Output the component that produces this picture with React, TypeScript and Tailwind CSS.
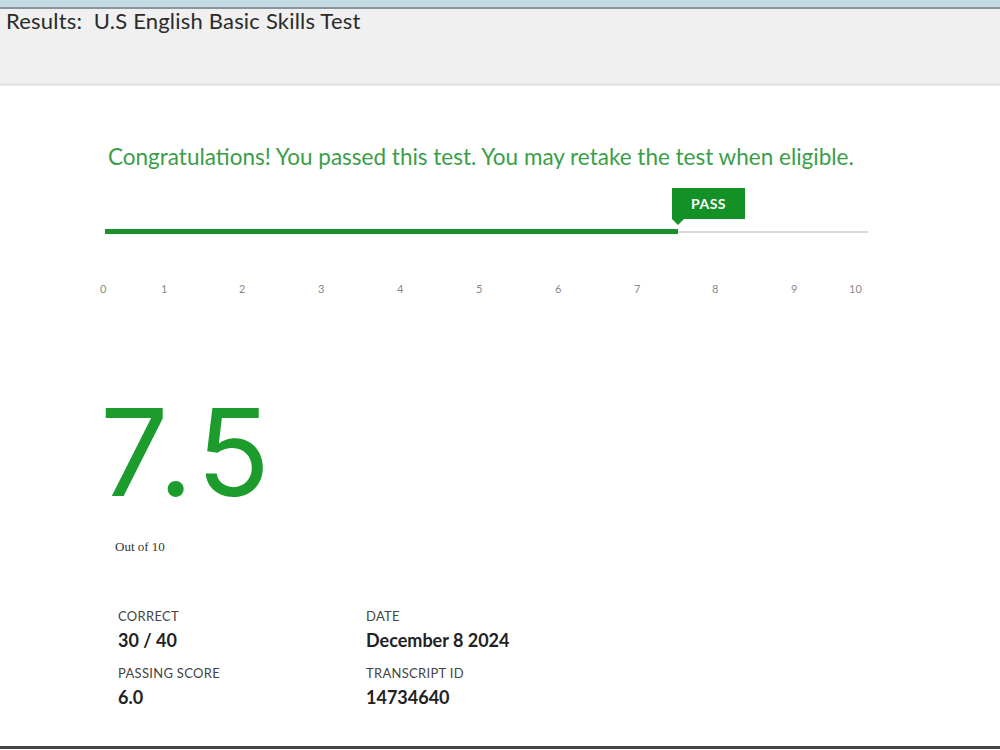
const ticks = ['0', '1', '2', '3', '4', '5', '6', '7', '8', '9', '10'];

function Stat({ label, value }: { label: string; value: string }) {
  return (
    <div>
      <div className="text-[13px] leading-[14px] tracking-[0.3px] text-[#444] uppercase">{label}</div>
      <div className="mt-[7px] text-[18px] leading-[20px] font-bold text-[#222]">{value}</div>
    </div>
  );
}

export default function App() {
  return (
    <div className="w-[1000px] h-[750px] bg-white flex flex-col overflow-hidden font-['Lato',_sans-serif]">
      <div className="h-[9px] bg-[#c3dbe3] border-b-2 border-[#8a9599]" />
      <div className="h-[77px] bg-[#f0f0f0] border-b-[3px] border-[#e6e6e6]">
        <h1 className="pl-[6px] text-[22px] leading-[24px] tracking-[0.2px] text-[#2b2b2b]">Results:&nbsp; U.S English Basic Skills Test</h1>
      </div>

      <div className="flex-1 flex flex-col pl-[105px]">
        <p className="mt-[59px] pl-[3px] text-[22.5px] leading-[24px] text-[#3a9e48]">
          Congratulations! You passed this test. You may retake the test when eligible.
        </p>

        <div className="relative mt-[19px] w-[763px] h-[45px]">
          <div className="absolute left-[567px] top-0 w-[73px] h-[31px] bg-[#139026] flex items-center justify-center text-white text-[14px] font-bold tracking-[0.5px]">
            PASS
          </div>
          <div className="absolute left-[567px] top-[31px] w-0 h-0 border-l-[6px] border-r-[6px] border-t-[6px] border-l-transparent border-r-transparent border-t-[#139026]" />
          <div className="absolute left-0 top-[41px] w-full flex items-center">
            <div className="w-[573px] h-[5px] bg-[#1a8f2a]" />
            <div className="flex-1 h-[2px] bg-[#d8d8d8]" />
          </div>
        </div>

        <div className="mt-[49px] -ml-[5px] grid grid-cols-[61px_78px_79px_79px_79px_79px_79px_78px_79px_58px_auto] text-[11px] leading-[14px] text-[#888]">
          {ticks.map((t) => (
            <span key={t}>{t}</span>
          ))}
        </div>

        <div className="mt-[93px] -ml-[5px] text-[121px] leading-[127px] text-[#1c9c2c] font-['Inter',_sans-serif] tracking-[5px]">7.5</div>

        <div className="mt-[23px] ml-[10px] text-[13px] leading-[16px] text-[#333] font-['Liberation_Serif',_serif]">Out of 10</div>

        <div className="mt-[54px] ml-[13px] grid grid-cols-[248px_auto] gap-y-[16px]">
          <Stat label="Correct" value="30 / 40" />
          <Stat label="Date" value="December 8 2024" />
          <Stat label="Passing Score" value="6.0" />
          <Stat label="Transcript ID" value="14734640" />
        </div>
      </div>

      <div className="h-[3px] bg-[#444] mb-[1px]" />
    </div>
  );
}
